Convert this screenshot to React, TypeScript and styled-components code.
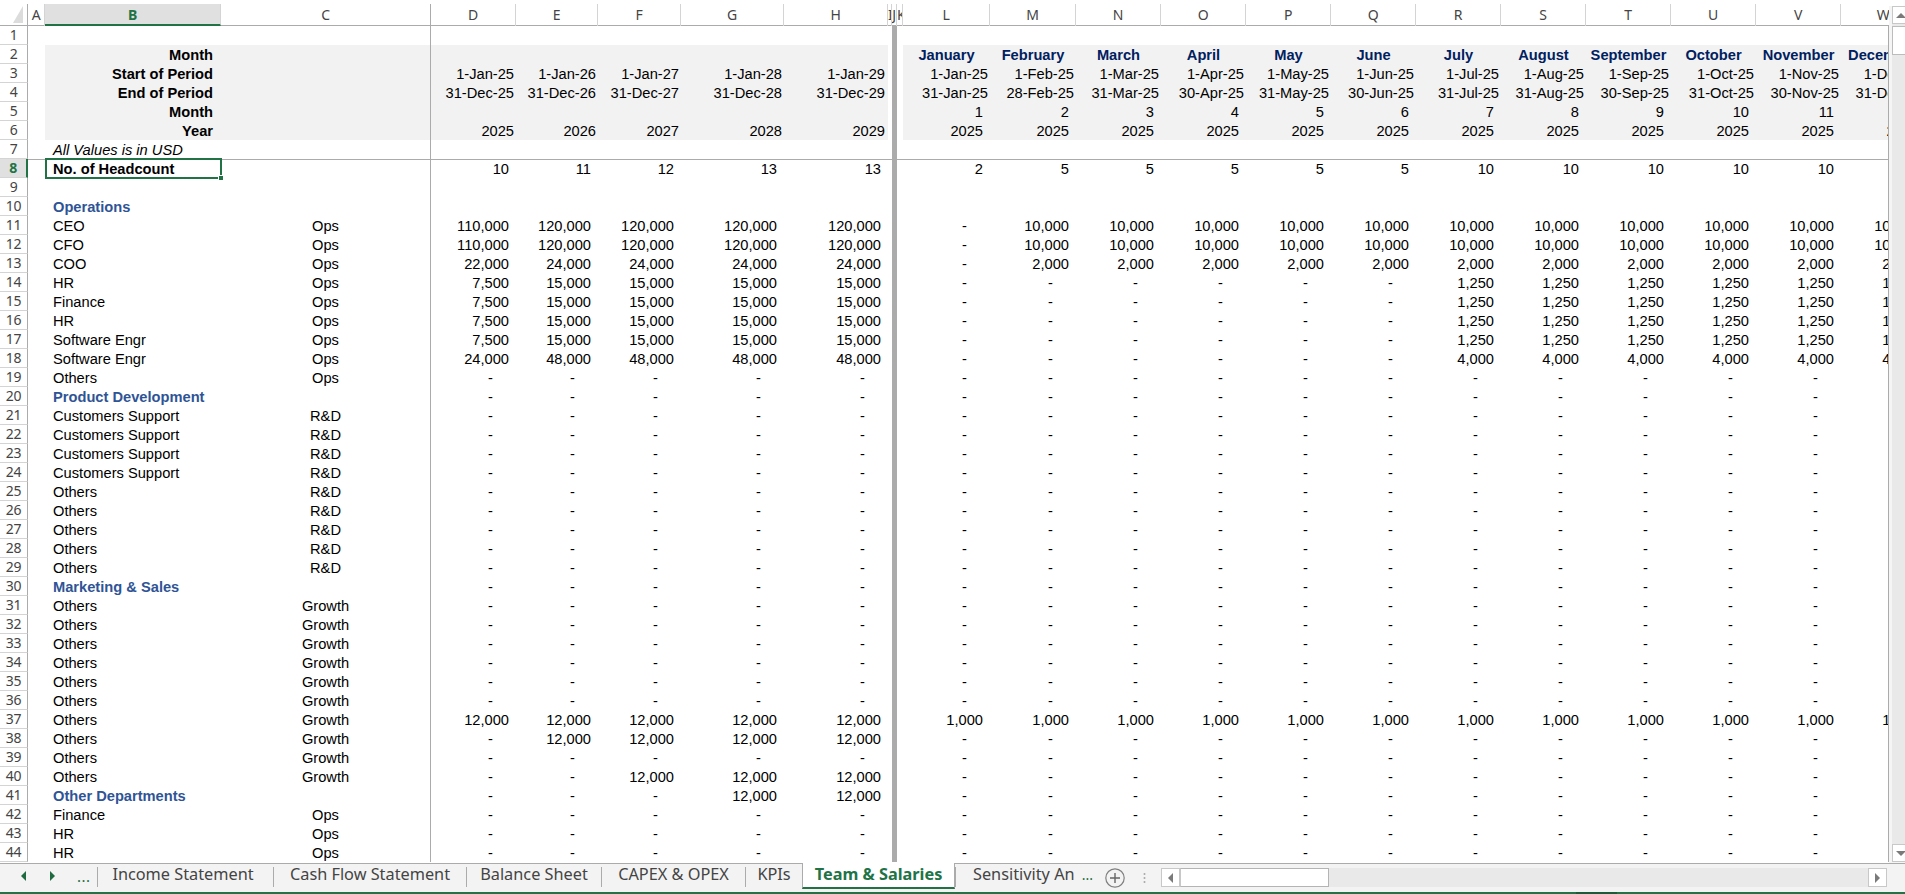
import * as React from 'react';
import styled, { createGlobalStyle } from 'styled-components';

const GlobalStyle = createGlobalStyle`
	html, body {
		margin: 0;
		padding: 0;
		height: 100%;
		background: #ffffff;
		overflow: hidden;
	}
`;

const GREEN = '#217346';
const LINE = '#ababab';
const TICK = '#d4d4d4';
const GRID_COLUMNS =
	'28px 17px 176px 210px 85px 82px 83px 103px 104px 4px 5px 6px 87px 86px 85px 85px 85px 85px 85px 85px 85px 85px 85px 85px';

const SPage = styled.div`
	display: flex;
	flex-direction: column;
	width: 1905px;
	height: 894px;
	overflow: hidden;
	background: #ffffff;
	font-family: 'Liberation Sans', Arial, sans-serif;
	font-size: 14.67px;
	color: #000000;
`;

const SMain = styled.div`
	display: flex;
	height: 863px;
	padding-top: 4px;
	box-sizing: border-box;
`;

const SSheet = styled.div`
	width: 1889px;
	flex: none;
	overflow: hidden;
`;

const SBody = styled.div`
	width: 1889px;
	box-sizing: border-box;
	overflow: hidden;
	border-right: 1px solid ${LINE};
`;

const SHeaderRow = styled.div`
	display: grid;
	grid-template-columns: ${GRID_COLUMNS};
	height: 22px;
	box-sizing: border-box;
	border-bottom: 1px solid ${LINE};
`;

const SHeaderCell = styled.div<{ $active?: boolean; $strong?: boolean }>`
	box-sizing: border-box;
	height: 22px;
	overflow: hidden;
	text-align: center;
	font-family: 'Noto Sans', sans-serif;
	font-size: 14px;
	letter-spacing: -0.3px;
	line-height: 21px;
	border-right: 1px solid ${(p) => (p.$strong ? LINE : TICK)};
	color: ${(p) => (p.$active ? GREEN : '#444444')};
	font-weight: ${(p) => (p.$active ? 700 : 400)};
	background: ${(p) => (p.$active ? '#e0e0e0' : 'transparent')};
	border-bottom: ${(p) => (p.$active ? `2px solid ${GREEN}` : 'none')};
`;

const SCorner = styled.div`
	box-sizing: border-box;
	height: 21px;
	border-right: 1px solid ${LINE};
	display: flex;
	justify-content: flex-end;
	padding: 2px 3px 0 0;
`;

const SRow = styled.div<{ $topRule?: boolean }>`
	display: grid;
	grid-template-columns: ${GRID_COLUMNS};
	height: 19px;
	box-shadow: ${(p) => (p.$topRule ? `inset 0 1px 0 ${LINE}` : 'none')};
`;

const SRowHead = styled.div<{ $active?: boolean }>`
	box-sizing: border-box;
	height: 19px;
	font-family: 'Noto Sans', sans-serif;
	font-size: 14px;
	letter-spacing: -0.3px;
	line-height: 18px;
	text-align: center;
	color: ${(p) => (p.$active ? GREEN : '#444444')};
	font-weight: ${(p) => (p.$active ? 700 : 400)};
	background: ${(p) => (p.$active ? '#e0e0e0' : '#ffffff')};
	border-right: ${(p) => (p.$active ? `2px solid ${GREEN}` : `1px solid ${LINE}`)};
	border-bottom: 1px solid ${TICK};
`;

const SCell = styled.div<{
	$align?: 'left' | 'right' | 'center';
	$pad?: number;
	$fill?: boolean;
	$rule?: boolean;
	$bold?: boolean;
	$italic?: boolean;
	$color?: string;
}>`
	box-sizing: border-box;
	height: 19px;
	min-width: 0;
	overflow: hidden;
	white-space: nowrap;
	line-height: 21px;
	text-align: ${(p) => p.$align ?? 'left'};
	padding-left: ${(p) => (p.$align === 'left' || !p.$align ? (p.$pad ?? 0) : 0)}px;
	padding-right: ${(p) => (p.$align === 'right' ? (p.$pad ?? 0) : 0)}px;
	background: ${(p) => (p.$fill ? '#f2f2f2' : 'transparent')};
	border-right: ${(p) => (p.$rule ? `1px solid ${LINE}` : 'none')};
	font-weight: ${(p) => (p.$bold ? 700 : 400)};
	font-style: ${(p) => (p.$italic ? 'italic' : 'normal')};
	color: ${(p) => p.$color ?? '#000000'};
`;

const SSelectedCell = styled(SCell)`
	position: relative;
	overflow: visible;
	&::after {
		content: '';
		position: absolute;
		top: -1px;
		left: 0;
		right: -1px;
		bottom: -1px;
		border: 2px solid ${GREEN};
		z-index: 2;
	}
	&::before {
		content: '';
		position: absolute;
		right: -3px;
		bottom: -3px;
		width: 6px;
		height: 6px;
		background: ${GREEN};
		border: 1px solid #ffffff;
		box-sizing: border-box;
		z-index: 3;
	}
`;

const SPaneGap = styled.div`
	background: ${LINE};
	height: 19px;
`;

const SVGutter = styled.div`
	width: 16px;
	flex: none;
	box-sizing: border-box;
	overflow: hidden;
	padding: 2px 0 0 3px;
	background: linear-gradient(#ffffff 2px, #f5f5f5 2px);
`;

const SVTrack = styled.div`
	width: 17px;
	height: 856px;
	display: flex;
	flex-direction: column;
	background: #e9e9e9;
`;

const SVButton = styled.div<{ $down?: boolean }>`
	width: 17px;
	height: 18px;
	flex: none;
	margin-top: ${(p) => (p.$down ? 'auto' : '0')};
	box-sizing: border-box;
	border: 1px solid #c8c8c8;
	background: #ffffff;
	display: flex;
	align-items: center;
	justify-content: center;
`;

const SVThumb = styled.div`
	width: 17px;
	height: 29px;
	margin-top: 2px;
	box-sizing: border-box;
	border: 1px solid #bcbcbc;
	background: #ffffff;
`;

const STabBar = styled.div`
	display: flex;
	align-items: flex-start;
	height: 29px;
	box-sizing: border-box;
	background: #f3f3f3;
	border-top: 1px solid ${LINE};
	font-family: 'Noto Sans', sans-serif;
	font-size: 16.3px;
	color: #444444;
`;

const SNav = styled.div`
	width: 97px;
	height: 28px;
	flex: none;
	box-sizing: border-box;
	display: flex;
	align-items: center;
	gap: 22px;
	padding: 0 0 4px 20px;
	color: #1e6b40;
`;

const SDots = styled.span`
	font-size: 15px;
	font-weight: 400;
	letter-spacing: 0.5px;
	line-height: 14px;
	margin-left: -1px;
`;

const STab = styled.div<{ $w: number; $active?: boolean; $left?: boolean; $inset?: number }>`
	width: ${(p) => p.$w}px;
	flex: none;
	box-sizing: border-box;
	white-space: nowrap;
	overflow: hidden;
	text-align: ${(p) => (p.$left ? 'left' : 'center')};
	padding-left: ${(p) => (p.$left ? 17 : 0)}px;
	padding-right: ${(p) => p.$inset ?? 0}px;
	line-height: 14px;
	height: ${(p) => (p.$active ? '26px' : '20px')};
	margin-top: ${(p) => (p.$active ? '-1px' : '3px')};
	padding-top: ${(p) => (p.$active ? '4px' : '0')};
	background: ${(p) => (p.$active ? '#ffffff' : 'transparent')};
	color: ${(p) => (p.$active ? GREEN : '#444444')};
	font-weight: ${(p) => (p.$active ? 700 : 400)};
	border-left: 1px solid ${LINE};
	border-right: ${(p) => (p.$active ? `1px solid ${LINE}` : 'none')};
	border-bottom: ${(p) => (p.$active ? `2px solid ${GREEN}` : 'none')};
`;

const SMore = styled.span`
	color: #1e6b40;
	margin-left: 7px;
	font-size: 14px;
`;

const SAddSheet = styled.div`
	width: 40px;
	height: 28px;
	flex: none;
	display: flex;
	align-items: center;
	justify-content: center;
`;

const SSplitter = styled.div`
	width: 18px;
	height: 28px;
	flex: none;
	display: flex;
	align-items: center;
	justify-content: center;
`;

const SHScroll = styled.div`
	display: flex;
	width: 726px;
	height: 19px;
	margin: 4px 0 0 8px;
	flex: none;
	background: #e9e9e9;
`;

const SHButton = styled.div<{ $right?: boolean }>`
	width: 19px;
	height: 19px;
	flex: none;
	box-sizing: border-box;
	border: 1px solid #c8c8c8;
	background: #ffffff;
	margin-left: ${(p) => (p.$right ? 'auto' : '0')};
	display: flex;
	align-items: center;
	justify-content: center;
`;

const SHThumb = styled.div`
	width: 149px;
	height: 19px;
	box-sizing: border-box;
	border: 1px solid #b4b4b4;
	border-left-color: #c8c8c8;
	background: #ffffff;
`;

const SStatusBar = styled.div`
	flex: 1;
	background: ${GREEN};
	padding-left: 1576px;
`;

const SStatusMark = styled.div`
	width: 41px;
	height: 2px;
	background: #1a5c38;
`;

interface IArrowProps {
	dir: 'left' | 'right' | 'up' | 'down';
	color: string;
}

const Arrow = ({ dir, color }: IArrowProps) => {
	const points = {
		left: '6,0 6,10 1,5',
		right: '1,0 1,10 6,5',
		up: '0,6 10,6 5,1',
		down: '0,1 10,1 5,6',
	}[dir];
	const horizontal = dir === 'left' || dir === 'right';
	return (
		<svg width={horizontal ? 7 : 10} height={horizontal ? 10 : 7} viewBox={horizontal ? '0 0 7 10' : '0 0 10 7'}>
			<polygon points={points} fill={color} />
		</svg>
	);
};

const HEADERS = ['A', 'B', 'C', 'D', 'E', 'F', 'G', 'H', 'I', 'J', 'K', 'L', 'M', 'N', 'O', 'P', 'Q', 'R', 'S', 'T', 'U', 'V', 'W'];

const MONTHS = ['January', 'February', 'March', 'April', 'May', 'June', 'July', 'August', 'September', 'October', 'November', 'December'];
const STARTS = ['1-Jan-25', '1-Feb-25', '1-Mar-25', '1-Apr-25', '1-May-25', '1-Jun-25', '1-Jul-25', '1-Aug-25', '1-Sep-25', '1-Oct-25', '1-Nov-25', '1-Dec-25'];
const ENDS = ['31-Jan-25', '28-Feb-25', '31-Mar-25', '30-Apr-25', '31-May-25', '30-Jun-25', '31-Jul-25', '31-Aug-25', '30-Sep-25', '31-Oct-25', '30-Nov-25', '31-Dec-25'];

const rep = (v: string, n: number) => Array<string>(n).fill(v);
const dashes = (n: number) => rep('-', n);

interface IDataRow {
	label?: string;
	group?: string;
	section?: boolean;
	annual: string[];
	monthly: string[];
}

const salaried = (label: string, first: string, rest: string, monthly: string): IDataRow => ({
	label,
	group: 'Ops',
	annual: [first, ...rep(rest, 4)],
	monthly: [...dashes(6), ...rep(monthly, 6)],
});

const execRow = (label: string, first: string, rest: string, monthly: string): IDataRow => ({
	label,
	group: 'Ops',
	annual: [first, ...rep(rest, 4)],
	monthly: ['-', ...rep(monthly, 11)],
});

const blank = (label: string, group: string): IDataRow => ({
	label,
	group,
	annual: dashes(5),
	monthly: dashes(12),
});

const section = (label: string, annual: string[] = dashes(5)): IDataRow => ({
	label,
	section: true,
	annual,
	monthly: dashes(12),
});

const BODY_ROWS: IDataRow[] = [
	{ annual: [], monthly: [] },
	{ label: 'Operations', section: true, annual: [], monthly: [] },
	execRow('CEO', '110,000', '120,000', '10,000'),
	execRow('CFO', '110,000', '120,000', '10,000'),
	execRow('COO', '22,000', '24,000', '2,000'),
	salaried('HR', '7,500', '15,000', '1,250'),
	salaried('Finance', '7,500', '15,000', '1,250'),
	salaried('HR', '7,500', '15,000', '1,250'),
	salaried('Software Engr', '7,500', '15,000', '1,250'),
	salaried('Software Engr', '24,000', '48,000', '4,000'),
	blank('Others', 'Ops'),
	section('Product Development'),
	blank('Customers Support', 'R&D'),
	blank('Customers Support', 'R&D'),
	blank('Customers Support', 'R&D'),
	blank('Customers Support', 'R&D'),
	...rep('Others', 5).map((l) => blank(l, 'R&D')),
	section('Marketing & Sales'),
	...rep('Others', 6).map((l) => blank(l, 'Growth')),
	{ label: 'Others', group: 'Growth', annual: rep('12,000', 5), monthly: rep('1,000', 12) },
	{ label: 'Others', group: 'Growth', annual: ['-', ...rep('12,000', 4)], monthly: dashes(12) },
	blank('Others', 'Growth'),
	{ label: 'Others', group: 'Growth', annual: ['-', '-', ...rep('12,000', 3)], monthly: dashes(12) },
	section('Other Departments', ['-', '-', '-', '12,000', '12,000']),
	blank('Finance', 'Ops'),
	blank('HR', 'Ops'),
	blank('HR', 'Ops'),
];

const TABS = [
	{ name: 'Income Statement', w: 176, inset: 5 },
	{ name: 'Cash Flow Statement', w: 193 },
	{ name: 'Balance Sheet', w: 135 },
	{ name: 'CAPEX & OPEX', w: 144 },
	{ name: 'KPIs', w: 57 },
];

const Num = ({ v, pad = 7, fill }: { v: string; pad?: number; fill?: boolean }) => (
	<SCell $align='right' $pad={v === '-' ? 23 : pad} $fill={fill}>
		{v}
	</SCell>
);

interface ITopRowProps {
	n: number;
	label?: string;
	annual: string[];
	monthly: string[];
	monthlyPad: number;
	monthlyHeading?: boolean;
}

const TopRow = ({ n, label, annual, monthly, monthlyPad, monthlyHeading }: ITopRowProps) => (
	<SRow>
		<SRowHead>{n}</SRowHead>
		<SCell />
		<SCell $fill $align='right' $pad={8} $bold>
			{label}
		</SCell>
		<SCell $fill $rule />
		{[0, 1, 2, 3, 4].map((i) => (
			<Num key={i} v={annual[i] ?? ''} pad={i === 4 ? 3 : 2} fill />
		))}
		<SCell />
		<SPaneGap />
		<SCell />
		{monthly.map((v, i) =>
			monthlyHeading ? (
				<SCell key={i} $fill $align='center' $bold $color='#002060'>
					{v}
				</SCell>
			) : (
				<Num key={i} v={v} pad={monthlyPad} fill />
			)
		)}
	</SRow>
);

const App = () => {
	return (
		<SPage>
			<GlobalStyle />
			<SMain>
				<SSheet>
					<SHeaderRow>
						<SCorner>
							<svg width='11' height='18' viewBox='0 0 11 18'>
								<polygon points='10,0 10,17 0,17' fill='#dcdcdc' />
							</svg>
						</SCorner>
						{HEADERS.map((h) => (
							<SHeaderCell key={h} $active={h === 'B'} $strong={h === 'C'}>
								{h}
							</SHeaderCell>
						))}
					</SHeaderRow>

					<SBody>
						<SRow>
							<SRowHead>1</SRowHead>
							<SCell />
							<SCell />
							<SCell $rule />
							{Array.from({ length: 5 }).map((_, i) => (
								<SCell key={i} />
							))}
							<SCell />
							<SPaneGap />
						</SRow>
						<TopRow n={2} label='Month' annual={[]} monthly={MONTHS} monthlyPad={0} monthlyHeading />
						<TopRow
							n={3}
							label='Start of Period'
							annual={['1-Jan-25', '1-Jan-26', '1-Jan-27', '1-Jan-28', '1-Jan-29']}
							monthly={STARTS}
							monthlyPad={2}
						/>
						<TopRow
							n={4}
							label='End of Period'
							annual={['31-Dec-25', '31-Dec-26', '31-Dec-27', '31-Dec-28', '31-Dec-29']}
							monthly={ENDS}
							monthlyPad={2}
						/>
						<TopRow
							n={5}
							label='Month'
							annual={[]}
							monthly={['1', '2', '3', '4', '5', '6', '7', '8', '9', '10', '11', '12']}
							monthlyPad={7}
						/>
						<TopRow
							n={6}
							label='Year'
							annual={['2025', '2026', '2027', '2028', '2029']}
							monthly={rep('2025', 12)}
							monthlyPad={7}
						/>
						<SRow>
							<SRowHead>7</SRowHead>
							<SCell />
							<SCell $pad={8} $italic>
								All Values is in USD
							</SCell>
							<SCell $rule />
							{Array.from({ length: 5 }).map((_, i) => (
								<SCell key={i} />
							))}
							<SCell />
							<SPaneGap />
						</SRow>
						<SRow $topRule>
							<SRowHead $active>8</SRowHead>
							<SCell />
							<SSelectedCell $pad={8} $bold>
								No. of Headcount
							</SSelectedCell>
							<SCell $rule />
							{['10', '11', '12', '13', '13'].map((v, i) => (
								<Num key={i} v={v} />
							))}
							<SCell />
							<SPaneGap />
							<SCell />
							{['2', '5', '5', '5', '5', '5', '10', '10', '10', '10', '10', '10'].map((v, i) => (
								<Num key={i} v={v} />
							))}
						</SRow>

						{BODY_ROWS.map((row, idx) => (
							<SRow key={idx}>
								<SRowHead>{idx + 9}</SRowHead>
								<SCell />
								<SCell $pad={8} $bold={row.section} $color={row.section ? '#2f5496' : undefined}>
									{row.label}
								</SCell>
								<SCell $rule $align='center'>
									{row.group}
								</SCell>
								{row.annual.length > 0
									? row.annual.map((v, i) => <Num key={i} v={v} />)
									: Array.from({ length: 5 }).map((_, i) => <SCell key={i} />)}
								<SCell />
								<SPaneGap />
								<SCell />
								{row.monthly.map((v, i) => (
									<Num key={i} v={v} />
								))}
							</SRow>
						))}
					</SBody>
				</SSheet>
				<SVGutter>
					<SVTrack>
						<SVButton>
							<Arrow dir='up' color='#7a7a7a' />
						</SVButton>
						<SVThumb />
						<SVButton $down>
							<Arrow dir='down' color='#7a7a7a' />
						</SVButton>
					</SVTrack>
				</SVGutter>
			</SMain>

			<STabBar>
				<SNav>
					<Arrow dir='left' color='#1e6b40' />
					<Arrow dir='right' color='#1e6b40' />
					<SDots>...</SDots>
				</SNav>
				{TABS.map((t) => (
					<STab key={t.name} $w={t.w} $inset={t.inset}>
						{t.name}
					</STab>
				))}
				<STab $w={153} $active>
					Team &amp; Salaries
				</STab>
				<STab $w={140} $left>
					Sensitivity An
					<SMore>...</SMore>
				</STab>
				<SAddSheet>
					<svg width='20' height='20' viewBox='0 0 20 20'>
						<circle cx='10' cy='10' r='9.2' fill='none' stroke='#808080' strokeWidth='1.2' />
						<path d='M10 5v10M5 10h10' stroke='#666666' strokeWidth='1.4' />
					</svg>
				</SAddSheet>
				<SSplitter>
					<svg width='3' height='10' viewBox='0 0 3 10'>
						<circle cx='1.5' cy='1' r='1' fill='#a8a8a8' />
						<circle cx='1.5' cy='5' r='1' fill='#a8a8a8' />
						<circle cx='1.5' cy='9' r='1' fill='#a8a8a8' />
					</svg>
				</SSplitter>
				<SHScroll>
					<SHButton>
						<Arrow dir='left' color='#7a7a7a' />
					</SHButton>
					<SHThumb />
					<SHButton $right>
						<Arrow dir='right' color='#7a7a7a' />
					</SHButton>
				</SHScroll>
			</STabBar>
			<SStatusBar>
				<SStatusMark />
			</SStatusBar>
		</SPage>
	);
};

export default App;
